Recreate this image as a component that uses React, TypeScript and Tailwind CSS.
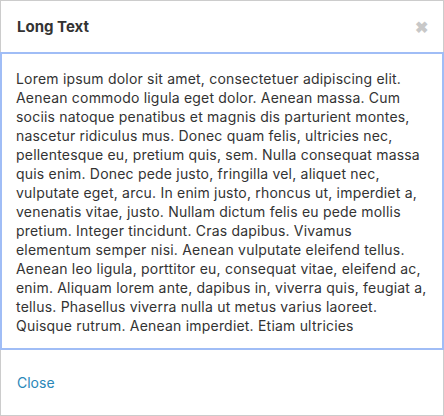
const longText =
  'Lorem ipsum dolor sit amet, consectetuer adipiscing elit. Aenean commodo ligula eget dolor. Aenean massa. Cum sociis natoque penatibus et magnis dis parturient montes, nascetur ridiculus mus. Donec quam felis, ultricies nec, pellentesque eu, pretium quis, sem. Nulla consequat massa quis enim. Donec pede justo, fringilla vel, aliquet nec, vulputate eget, arcu. In enim justo, rhoncus ut, imperdiet a, venenatis vitae, justo. Nullam dictum felis eu pede mollis pretium. Integer tincidunt. Cras dapibus. Vivamus elementum semper nisi. Aenean vulputate eleifend tellus. Aenean leo ligula, porttitor eu, consequat vitae, eleifend ac, enim. Aliquam lorem ante, dapibus in, viverra quis, feugiat a, tellus. Phasellus viverra nulla ut metus varius laoreet. Quisque rutrum. Aenean imperdiet. Etiam ultricies'

export default function App() {
  return (
    <div className="w-[444px] h-[416px] bg-white border border-[#cccccc] flex flex-col font-['Inter',sans-serif] text-[#333333]">
      {/* Header */}
      <div className="h-[51px] shrink-0 flex items-center justify-between pl-4 pr-[15px]">
        <h2 className="text-[15px] font-bold leading-none">Long Text</h2>
        <button className="text-[#c8c8c8] text-[16px] font-bold leading-none" aria-label="Close">
          ✖
        </button>
      </div>

      {/* Body */}
      <div
        tabIndex={0}
        className="-mx-px h-[298px] shrink-0 overflow-hidden ring-2 ring-inset ring-[#a0bdf6] pl-4 pr-[17px] pt-[17px] text-[14px] leading-[19px] tracking-[0.2px]"
      >
        <p>{longText}</p>
      </div>

      {/* Footer */}
      <div className="flex-1 flex items-center px-4">
        <a href="#" className="text-[14px] text-[#2a87b8] leading-none">
          Close
        </a>
      </div>
    </div>
  )
}
